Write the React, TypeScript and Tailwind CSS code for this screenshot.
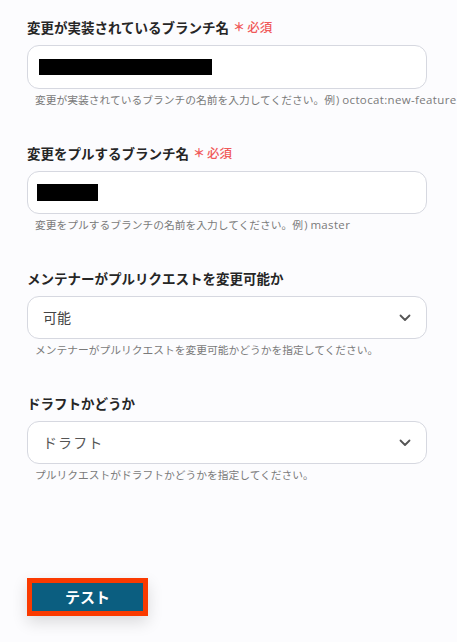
import React from "react";

const font = { fontFamily: '"Noto Sans CJK JP", "Noto Sans", sans-serif' };
const latin = { fontFamily: '"Open Sans", "Noto Sans", sans-serif' };

const Label = ({ text, required }: { text: string; required?: boolean }) => (
  <div className="flex items-center h-5 text-[13.5px] font-semibold text-[#262626]">
    <span>{text}</span>
    {required && (
      <span className="ml-1 text-[#f05a5a] font-medium text-[12.5px] flex items-center">
        <span className="text-[12px] font-bold mr-0.5">＊</span>必須
      </span>
    )}
  </div>
);

const Help = ({ text, example }: { text: string; example?: string }) => (
  <p className="mt-[3px] pl-2 h-4 leading-4 text-[10.75px] text-[#7a7a7a] whitespace-nowrap">
    {text}
    {example && (
      <>
        例<span style={latin} className="text-[11px] pl-px pr-[3px]">)</span>
        <span style={latin} className="text-[11.5px] tracking-[0.03em]">{example}</span>
      </>
    )}
  </p>
);

const Chevron = () => (
  <svg width="12" height="8" viewBox="0 0 12 8" fill="none">
    <path d="M1.5 1.5L6 6l4.5-4.5" stroke="#555" strokeWidth="1.8" strokeLinecap="round" strokeLinejoin="round" />
  </svg>
);

export default function App() {
  return (
    <div style={font} className="w-[457px] h-[642px] overflow-hidden bg-[#fcfcfe] pl-[27px]">
      <div className="pt-[17px]">
        <Label text="変更が実装されているブランチ名" required />
        <div className="mt-2 w-[400px] h-[44px] border border-[#d6d8e0] rounded-xl bg-white flex items-center pl-[11px]">
          <div className="w-[173px] h-[16px] bg-black" />
        </div>
        <Help text="変更が実装されているブランチの名前を入力してください。" example="octocat:new-feature" />
      </div>

      <div className="mt-[35px]">
        <Label text="変更をプルするブランチ名" required />
        <div className="mt-2 w-[400px] h-[43px] border border-[#d6d8e0] rounded-xl bg-white flex items-center pl-[9px]">
          <div className="w-[61px] h-[17px] bg-black" />
        </div>
        <Help text="変更をプルするブランチの名前を入力してください。" example="master" />
      </div>

      <div className="mt-[35px]">
        <Label text="メンテナーがプルリクエストを変更可能か" />
        <div className="mt-2 w-[400px] h-[43px] border border-[#d6d8e0] rounded-xl bg-white flex items-center justify-between pl-[15px] pr-[15px]">
          <span className="text-[14px] text-[#444]">可能</span>
          <Chevron />
        </div>
        <Help text="メンテナーがプルリクエストを変更可能かどうかを指定してください。" />
      </div>

      <div className="mt-[35px]">
        <Label text="ドラフトかどうか" />
        <div className="mt-2 w-[400px] h-[43px] border border-[#d6d8e0] rounded-xl bg-white flex items-center justify-between pl-[15px] pr-[15px]">
          <span className="text-[14px] text-[#555] tracking-[0.08em]">ドラフト</span>
          <Chevron />
        </div>
        <Help text="プルリクエストがドラフトかどうかを指定してください。" />
      </div>

      <div className="mt-[95px] inline-block border-[5px] border-[#fa3a00] shadow-[0_6px_16px_rgba(0,0,0,0.14)]">
        <div className="w-[111px] h-[28px] bg-[#0b5e80] flex items-center justify-center text-white font-bold text-[15px]">
          テスト
        </div>
      </div>
    </div>
  );
}
